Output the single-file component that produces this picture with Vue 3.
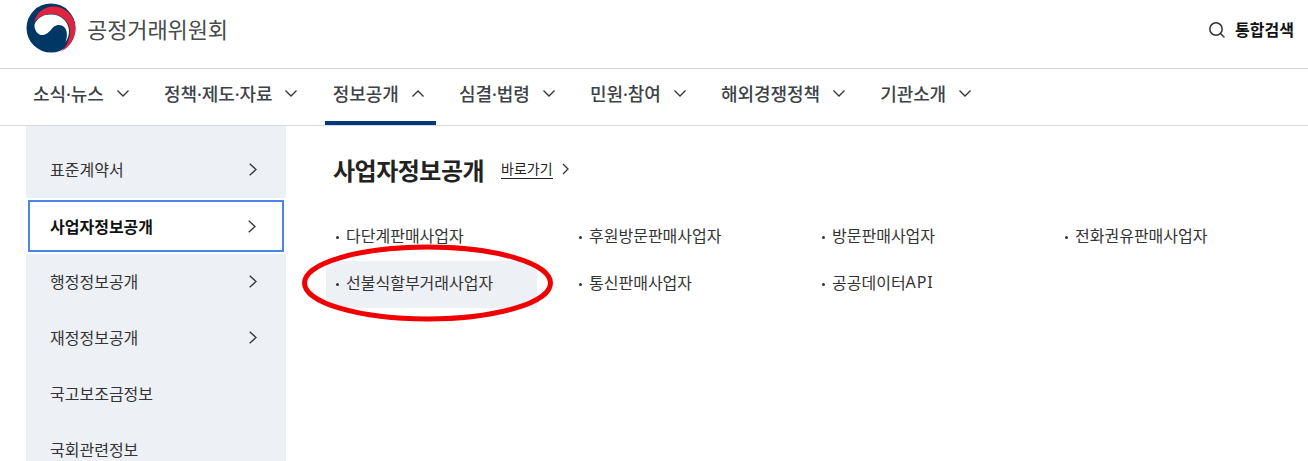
<script setup>
const nav = [
  { label: '소식·뉴스' },
  { label: '정책·제도·자료' },
  { label: '정보공개', active: true },
  { label: '심결·법령' },
  { label: '민원·참여' },
  { label: '해외경쟁정책' },
  { label: '기관소개' }
]
const side = [
  { label: '표준계약서', arrow: true },
  { label: '사업자정보공개', arrow: true, active: true },
  { label: '행정정보공개', arrow: true },
  { label: '재정정보공개', arrow: true },
  { label: '국고보조금정보' },
  { label: '국회관련정보' }
]
const links = [
  { label: '다단계판매사업자' },
  { label: '후원방문판매사업자' },
  { label: '방문판매사업자' },
  { label: '전화권유판매사업자' },
  { label: '선불식할부거래사업자', hot: true },
  { label: '통신판매사업자' },
  { label: '공공데이터', latin: 'API' }
]
</script>

<template>
  <div class="page">
    <header class="top">
      <div class="brand">
        <svg class="logo" width="50" height="50" viewBox="4.500 3.500 50 50">
          <circle cx="29.500" cy="28.500" r="24.500" fill="#003764" />
          <path d="M12.500 23C14.500 13 23 7 32 7C44 7 54 17 54 29C54 39 48 48 40 51.500C46 46 49 38 48.500 31C47.500 21 39 14 29 14.500C22 15 16 18 12.500 23Z" fill="#e0243f" />
          <path d="M13 25C16 18 22 15 29 15C39 14.500 47 22 47.500 31C47.700 35 46.500 39 44 43C46 37 46 32 43.500 28.500C41 25 36 24.500 32.500 27C29.500 29.500 27.500 34 22 35.500C17 36.500 12.500 31 13 25Z" fill="#fff" />
        </svg>
        <span class="org">공정거래위원회</span>
      </div>
      <div class="search">
        <svg width="18" height="18" viewBox="0 0 18 18" fill="none" stroke="#333" stroke-width="1.500">
          <circle cx="8" cy="8" r="6.200" />
          <path d="M12.500 12.500L16.500 16.500" />
        </svg>
        <span>통합검색</span>
      </div>
    </header>

    <nav class="nav">
      <a v-for="n in nav" :key="n.label" class="nav-item" :class="{ on: n.active }">
        <span>{{ n.label }}</span>
        <svg width="12" height="7" viewBox="0 0 12 7" fill="none" stroke="#333" stroke-width="1.300">
          <path :d="n.active ? 'M.5 6.500L6 1L11.500 6.500' : 'M.5 .5L6 6L11.500 .5'" />
        </svg>
      </a>
    </nav>

    <main class="body">
      <aside class="side">
        <a v-for="s in side" :key="s.label" class="side-item" :class="{ on: s.active }">
          <span>{{ s.label }}</span>
          <svg v-if="s.arrow" width="8" height="13" viewBox="0 0 8 13" fill="none" stroke="#333" stroke-width="1.300">
            <path d="M.7 .7L7 6.500L.7 12.300" />
          </svg>
        </a>
      </aside>
      <section class="content">
        <div class="title-row">
          <h2>사업자정보공개</h2>
          <a class="go">바로가기</a>
          <svg width="7" height="12" viewBox="0 0 7 12" fill="none" stroke="#333" stroke-width="1.300">
            <path d="M1 1L6 6L1 11" />
          </svg>
        </div>
        <ul class="links">
          <li v-for="l in links" :key="l.label" :class="{ hot: l.hot }">
            <span class="link-box"><i class="dot"></i>{{ l.label }}<span v-if="l.latin" class="latin">{{ l.latin }}</span></span>
          </li>
        </ul>
        <svg class="circle" width="256" height="82" viewBox="0 0 256 82" fill="none">
          <ellipse cx="125.500" cy="40" rx="123" ry="36" stroke="#f00000" stroke-width="5" />
        </svg>
      </section>
    </main>
  </div>
</template>

<style>
html, body { margin: 0; overflow: hidden; background: #fff; }
</style>

<style scoped>
.page {
  width: 1308px;
  height: 461px;
  overflow: hidden;
  font-family: "Noto Sans", "Noto Sans CJK KR", sans-serif;
  color: #222;
}
.top {
  height: 68px;
  display: flex;
  align-items: center;
  justify-content: space-between;
  padding: 0 14px 0 26px;
  border-bottom: 1px solid #d9d9d9;
}
.brand { display: flex; align-items: center; gap: 11px; margin-top: -12px; }
.org { font-size: 22px; letter-spacing: -0.1px; color: #4a4a4a; position: relative; top: 1px; line-height: 30px; }
.search { display: flex; align-items: center; gap: 9px; font-size: 16px; font-weight: 700; color: #111; margin-top: -8px; line-height: 22px; }
.nav {
  height: 56px;
  display: flex;
  padding-left: 25px;
  border-bottom: 1px solid #d9d9d9;
  gap: 15.400px;
}
.nav-item {
  display: flex;
  align-items: center;
  gap: 13px;
  padding: 0 12px 4px 8px;
  font-size: 18px;
  font-weight: 500;
  letter-spacing: -0.1px;
  color: #3d4248;
  border-bottom: 4px solid transparent;
  height: 56px;
  box-sizing: border-box;
}
.nav-item.on { border-bottom-color: #003a7a; }
.body { display: flex; }
.side {
  width: 260px;
  margin-left: 26px;
  padding-top: 16px;
  background: #edf0f5;
  height: 340px;
  flex: none;
}
.side-item {
  height: 56px;
  box-sizing: border-box;
  padding: 0 29px 2px 24px;
  display: flex;
  align-items: center;
  justify-content: space-between;
  font-size: 16px;
  color: #333;
}
.side-item.on {
  background: #fff;
  border: 2px solid #4c84e8;
  box-shadow: 0 0 0 2px #fff;
  margin: 2px;
  height: 52px;
  padding: 0 26px 0 20px;
  font-weight: 700;
  color: #111;
}
.content { position: relative; flex: 1; padding: 0 0 0 47px; }
.title-row { display: flex; align-items: center; height: 86px; }
.title-row h2 { margin: 0; font-size: 24px; font-weight: 700; letter-spacing: -0.5px; color: #222; }
.go { margin-left: 17px; font-size: 14px; color: #222; border-bottom: 1px solid #222; line-height: 18px; }
.title-row svg { margin-left: 9px; }
.links {
  list-style: none;
  margin: 0 0 0 -7px;
  padding: 2px 0 0;
  display: grid;
  grid-template-columns: repeat(4, 243px);
  grid-auto-rows: 47px;
}
.link-box {
  display: flex;
  align-items: center;
  height: 47px;
  width: 211px;
  box-sizing: border-box;
  padding: 0 0 5px 20px;
  font-size: 16px;
  color: #333;
  position: relative;
}
.hot .link-box { background: #edf0f5; }
.latin { letter-spacing: 0.9px; }
.dot {
  position: absolute;
  left: 10px;
  top: 22px;
  width: 3px;
  height: 3px;
  border-radius: 50%;
  background: #333;
}
.circle { position: absolute; left: 16px; top: 117px; pointer-events: none; }
</style>
